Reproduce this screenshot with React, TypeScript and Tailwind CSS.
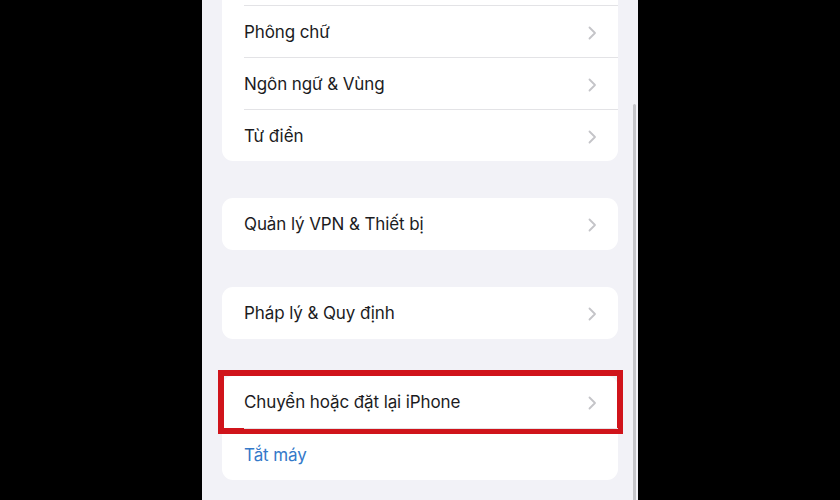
import React from "react";

type Row = { label: string; blue?: boolean; chevron?: boolean; marked?: boolean };

// nhóm đầu tiên có một hàng nằm khuất phía trên màn hình
const groups: { rows: Row[] }[] = [
  {
    rows: [
      { label: "", chevron: true },
      { label: "Phông chữ", chevron: true },
      { label: "Ngôn ngữ & Vùng", chevron: true },
      { label: "Từ điển", chevron: true },
    ],
  },
  { rows: [{ label: "Quản lý VPN & Thiết bị", chevron: true }] },
  { rows: [{ label: "Pháp lý & Quy định", chevron: true }] },
  {
    rows: [
      { label: "Chuyển hoặc đặt lại iPhone", chevron: true, marked: true },
      { label: "Tắt máy", blue: true },
    ],
  },
];

function Chevron() {
  return (
    <svg width="9" height="14" viewBox="0 0 9 14" fill="none" className="shrink-0">
      <path d="M1.5 1.5L7 7l-5.5 5.5" stroke="#c4c4c8" strokeWidth="1.8" strokeLinecap="round" strokeLinejoin="round" />
    </svg>
  );
}

function SettingsRow({ row, divider }: { row: Row; divider: boolean }) {
  return (
    <div className="relative pl-[22px]">
      <div
        className={
          "flex h-[52px] items-center justify-between pr-[21px] pt-[2px] " +
          (divider ? "border-t border-[#e3e3e6]" : "")
        }
      >
        <span
          className={
            "text-[17px] tracking-[-0.1px] " + (row.blue ? "text-[#3479c9]" : "text-[#1c1c1e]")
          }
        >
          {row.label}
        </span>
        {row.chevron && <Chevron />}
      </div>
      {row.marked && (
        <div className="pointer-events-none absolute -left-[4px] -right-[5px] -top-[6px] -bottom-[6px] border-[6px] border-[#d0141b]" />
      )}
    </div>
  );
}

export default function App() {
  return (
    <div
      className="flex h-[500px] w-[840px] justify-center overflow-hidden bg-black"
      style={{ fontFamily: "Inter, 'Noto Sans', sans-serif" }}
    >
      <div className="relative h-[500px] w-[436px] overflow-hidden bg-[#f2f2f7] px-5">
        <div className="-mt-[47px] flex flex-col gap-[37px]">
          {groups.map((g, gi) => (
            <div key={gi} className="rounded-[11px] bg-white">
              {g.rows.map((r, ri) => (
                <SettingsRow key={ri} row={r} divider={ri > 0} />
              ))}
            </div>
          ))}
        </div>
        {/* thanh cuộn */}
        <div className="absolute right-[2px] top-[104px] h-[400px] w-[3px] rounded-full bg-[#c5c5c9]" />
      </div>
    </div>
  );
}
